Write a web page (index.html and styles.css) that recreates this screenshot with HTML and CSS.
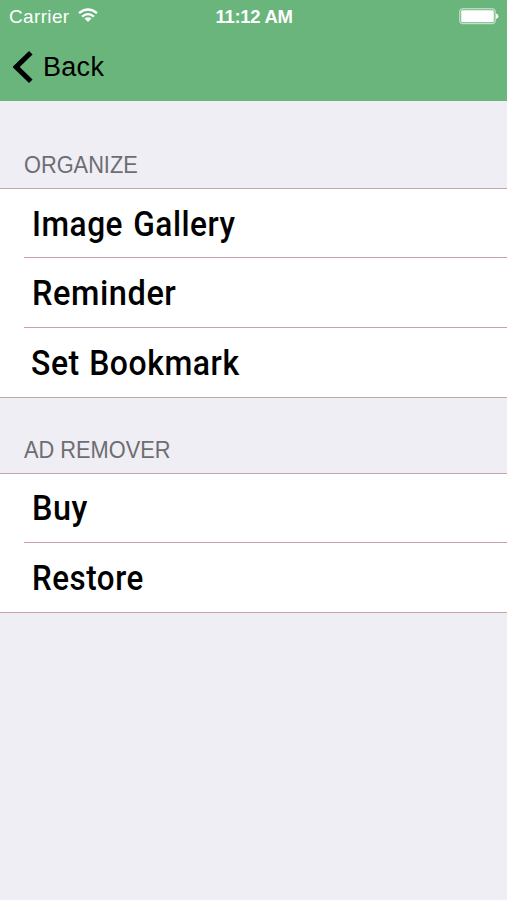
FILE: index.html
```html
<!DOCTYPE html>
<html lang="en">
<head>
<meta charset="utf-8">
<title>Settings</title>
<link rel="stylesheet" href="styles.css">
</head>
<body>
<header class="header">
  <div class="status">
    <div class="carrier"><span>Carrier</span>
      <svg class="wifi" width="20" height="15" viewBox="0 0 20 15" fill="none" stroke="#fff" stroke-width="2.3">
        <path d="M1 5.2Q10-2.2 19 5.2M4.1 8.6Q10 3.7 15.9 8.6"/>
        <path d="M6.5 10.6Q10 7.7 13.5 10.6L10 14Z" fill="#fff" stroke="none"/>
      </svg>
    </div>
    <div class="time">11:12 AM</div>
    <div class="power">
      <svg width="40" height="17" viewBox="0 0 40 17">
        <rect x=".8" y=".8" width="35.4" height="14.9" rx="2.6" fill="none" stroke="#fff" stroke-opacity=".75" stroke-width="1"/>
        <rect x="2.2" y="2.2" width="32.6" height="12.1" rx="1.2" fill="#fff"/>
        <path d="M37 5.4Q39.4 6 39.4 8.2T37 11Z" fill="#fff"/>
      </svg>
    </div>
  </div>
  <nav class="nav">
    <svg width="20" height="32" viewBox="0 0 20 32" fill="none" stroke="#000" stroke-width="5"><path d="M17.8 1.8L3.2 16L17.8 30.2"/></svg>
    <span class="back">Back</span>
  </nav>
</header>
<main>
  <section>
    <h2 class="heading first"><span class="title">ORGANIZE</span></h2>
    <ul class="list organize">
      <li class="row"><span class="label gallery">Image Gallery</span></li>
      <li class="row"><span class="label reminder">Reminder</span></li>
      <li class="row"><span class="label bookmark">Set Bookmark</span></li>
    </ul>
  </section>
  <section>
    <h2 class="heading"><span class="title">AD REMOVER</span></h2>
    <ul class="list remover">
      <li class="row"><span class="label buy">Buy</span></li>
      <li class="row"><span class="label restore">Restore</span></li>
    </ul>
  </section>
</main>
</body>
</html>
```
FILE: styles.css
```css
* { box-sizing: border-box; }
body { margin: 0; min-height: 900px; background: #efeef4; color: #000; font-family: "Liberation Sans", sans-serif; }
.header { height: 101px; background: #69b57b; }
.status { display: grid; grid-template-columns: 1fr auto 1fr; height: 33px; padding: 0 8px 0 9px; align-items: center; color: #fff; font-size: 19px; line-height: 33px; }
.carrier { display: flex; align-items: center; gap: 8px; letter-spacing: .35px; }
.wifi { margin-top: -2px; }
.time { font-size: 18.5px; font-weight: bold; letter-spacing: -.3px; }
.power { display: flex; justify-content: flex-end; }
.nav { display: flex; align-items: center; height: 68px; padding-left: 13px; gap: 10px; }
.back { font-size: 27px; line-height: 68px; letter-spacing: .3px; }
.heading { display: flex; align-items: flex-end; height: 75px; margin: 0; padding: 0 24px 9px; font-size: 23px; line-height: 28px; font-weight: normal; color: #6d6d72; }
.first { height: 87px; }
.title { transform: scaleX(.947); transform-origin: left; }
.list { display: grid; margin: 0; padding: 0; list-style: none; background: #fff; border-top: 1px solid #c9a3ab; border-bottom: 1px solid #c9a3ab; }
.organize { grid-template-rows: 68px 70px 70px; }
.remover { grid-template-rows: 68px 70px; }
.row { margin-left: 24px; padding-left: 8px; line-height: 71px; }
.row + .row { border-top: 1px solid #c9a3ab; }
.label { display: block; width: max-content; height: 68px; font-family: Roboto, sans-serif; font-size: 35px; font-weight: 500; letter-spacing: .6px; transform-origin: left; }
.gallery { word-spacing: 2px; transform: scaleX(.903); }
.reminder { transform: scaleX(.93); }
.bookmark { word-spacing: 1px; transform: translateX(-1px) scaleX(.913); }
.buy { line-height: 70px; transform: scaleX(.925); }
.restore { transform: scaleX(.895); }
```
